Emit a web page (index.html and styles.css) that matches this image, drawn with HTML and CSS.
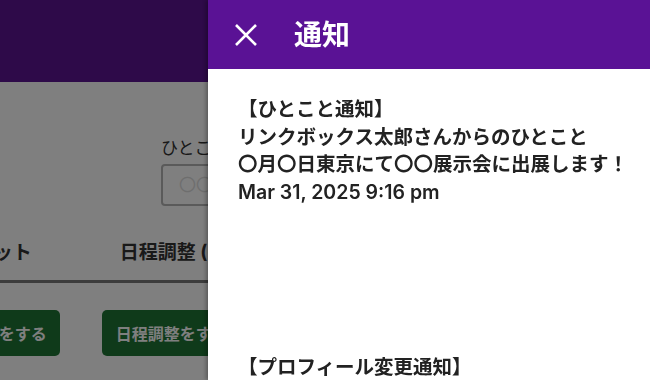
FILE: index.html
```html
<!DOCTYPE html>
<html>
<head>
  <title>通知</title>
  <meta http-equiv="Content-Type" content="text/html; charset=utf-8">
  <link rel="stylesheet" href="styles.css">
</head>
<body>
<div class="page">
  <header class="top-bar"></header>
  <main class="content">
    <div class="field">
      <label class="field-label">ひとことメッセージ</label>
      <div class="field-input">〇〇展示会に出展します</div>
    </div>
    <nav class="tabs">
      <span class="tab">チャット</span>
      <span class="tab">日程調整 (0)</span>
    </nav>
    <div class="actions">
      <button class="btn">チャットをする</button>
      <button class="btn">日程調整をする</button>
    </div>
  </main>
</div>

<div class="overlay"></div>

<aside class="drawer">
  <div class="drawer-head">
    <svg class="close" width="24" height="24" viewBox="0 0 24 24">
      <path d="M2 2 L22 22 M22 2 L2 22" stroke="#fff" stroke-width="2.6" fill="none"/>
    </svg>
    <h2 class="drawer-title">通知</h2>
  </div>
  <div class="drawer-body">
    <div class="notice">
      <div>【ひとこと通知】</div>
      <div>リンクボックス太郎さんからのひとこと</div>
      <div>〇月〇日東京にて〇〇展示会に出展します！</div>
      <div>Mar 31, 2025 9:16 pm</div>
    </div>
    <div class="notice">
      <div>【プロフィール変更通知】</div>
      <div>リンクボックス太郎さんがプロフィールを変更しました</div>
      <div>Mar 30, 2025 6:02 pm</div>
    </div>
  </div>
</aside>
</body>
</html>
```

FILE: styles.css
```css
html, body {
  margin: 0;
  padding: 0;
  overflow: hidden;
  font-family: Inter, "Noto Sans CJK JP", sans-serif;
  background: #fff;
  color: #333;
}

.page {
  width: 650px;
  height: 380px;
  overflow: hidden;
}

.top-bar {
  height: 82px;
  background: #5c1492;
}

.content {
  display: flex;
  flex-direction: column;
}

.field {
  margin: 54px 0 0 161px;
  display: flex;
  flex-direction: column;
}

.field-label {
  font-size: 17px;
  line-height: 24px;
  white-space: nowrap;
}

.field-input {
  margin-top: 4px;
  width: 360px;
  height: 38px;
  border: 2px solid #b4b4b4;
  border-radius: 4px;
  box-sizing: content-box;
  padding-left: 16px;
  font-size: 17px;
  line-height: 38px;
  color: #ddd;
  white-space: nowrap;
}

.tabs {
  margin: 33px 0 0 -44px;
  width: 800px;
  display: flex;
  gap: 88px;
  padding-bottom: 14px;
  border-bottom: 3px solid #787878;
}

.tab {
  font-size: 19px;
  font-weight: 700;
  line-height: 27px;
  white-space: nowrap;
}

.actions {
  margin: 27px 0 0 -79px;
  display: flex;
  gap: 42px;
}

.btn {
  height: 46px;
  padding: 0 13px 0 14px;
  border: none;
  border-radius: 5px;
  background: #1e7434;
  color: #fff;
  font-family: Inter, "Noto Sans CJK JP", sans-serif;
  font-size: 16px;
  font-weight: 700;
  white-space: nowrap;
}

.overlay {
  position: fixed;
  inset: 0;
  background: rgba(0, 0, 0, 0.5);
}

.drawer {
  position: fixed;
  top: 0;
  right: 0;
  width: 442px;
  height: 100%;
  background: #fff;
  box-shadow: -2px 0 4px rgba(0, 0, 0, 0.3);
}

.drawer-head {
  height: 69px;
  background: #5a1295;
  display: flex;
  align-items: center;
  padding-left: 26px;
}

.close {
  flex: none;
}

.drawer-title {
  margin: 0 0 0 36px;
  color: #fff;
  font-size: 28px;
  font-weight: 700;
  line-height: 1;
}

.drawer-body {
  padding: 27px 20px 0 30px;
}

.notice {
  font-size: 19.5px;
  font-weight: 600;
  line-height: 27.7px;
  color: #222;
  height: 258px;
  white-space: nowrap;
}
```
